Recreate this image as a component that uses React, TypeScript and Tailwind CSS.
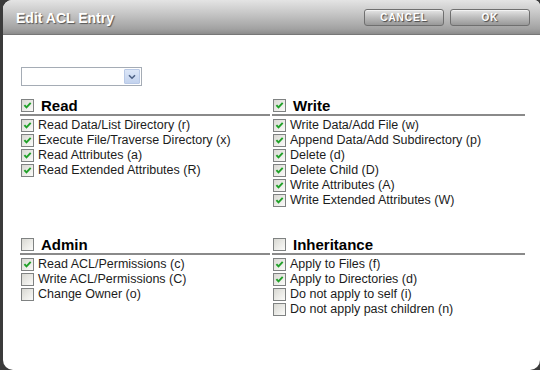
import React from "react";

function Check({ checked }: { checked: boolean }) {
  return (
    <span className="relative inline-block w-[13px] h-[13px] shrink-0 border border-[#7f8282] bg-[linear-gradient(135deg,#d8d8d2,#fbfbf9)]">
      {checked && (
        <svg viewBox="0 0 11 11" className="absolute left-0 top-0 w-[11px] h-[11px]">
          <path d="M2.4 5.1 L4.5 7.4 L8.7 2.8" fill="none" stroke="#21a129" strokeWidth="1.9" />
        </svg>
      )}
    </span>
  );
}

type Item = [string, boolean];

function Section({ title, checked, items }: { title: string; checked: boolean; items: Item[] }) {
  return (
    <div className="flex flex-col">
      <div className="h-[20px] flex items-center pl-[1px] gap-[7px] border-b-2 border-[#8a8a8a]">
        <Check checked={checked} />
        <span className="text-[15px] leading-[17px] font-bold text-black">{title}</span>
      </div>
      <div className="mt-[2px] flex flex-col">
        {items.map(([label, c]) => (
          <div key={label} className="h-[15px] flex items-center pl-[1px] gap-[4px]">
            <Check checked={c} />
            <span className="text-[12.5px] leading-[15px] text-[#1c1c1c] whitespace-nowrap">{label}</span>
          </div>
        ))}
      </div>
    </div>
  );
}

function Btn({ label }: { label: string }) {
  return (
    <div className="w-[80px] h-[17px] rounded-[3px] border border-[#6f6f6f] bg-[linear-gradient(to_bottom,#e6e6e6,#c0c0c0_45%,#989898)] flex items-center justify-center shadow-[inset_0_1px_0_#f2f2f2]">
      <span className="text-[10px] leading-[12px] font-bold tracking-[1px] text-white [text-shadow:1px_1px_1px_#444]">
        {label}
      </span>
    </div>
  );
}

export default function App() {
  return (
    <div
      className="w-[540px] h-[370px] bg-[#3b3b3b] overflow-hidden"
      style={{ fontFamily: '"Liberation Sans", Arial, sans-serif' }}
    >
      <div className="ml-[3px] w-[537px] h-[370px] bg-white rounded-tl-[9px] rounded-tr-[6px] rounded-b-[10px] overflow-hidden flex flex-col">
        <div className="h-[35px] shrink-0 flex items-center justify-between pl-[13px] pr-[10px] bg-[linear-gradient(to_bottom,#e4e4e4,#c6c6c6_40%,#a2a2a2_85%,#8c8c8c)] border-b border-[#777]">
          <span className="text-[14px] leading-[16px] font-bold text-white [text-shadow:1px_1px_1px_#555] pt-[1px]">
            Edit ACL Entry
          </span>
          <div className="flex gap-[6px] pt-[1px]">
            <Btn label="CANCEL" />
            <Btn label="OK" />
          </div>
        </div>

        <div className="pl-[17px] pt-[32px] flex flex-col">
          <div className="ml-[1px] w-[121px] h-[19px] border border-[#a5acb5] bg-white flex justify-end items-stretch p-[1px]">
            <div className="w-[16px] bg-[linear-gradient(to_bottom,#dce6f7,#c3d3ee)] border border-[#b9c9e6] rounded-[1px] flex items-center justify-center">
              <svg viewBox="0 0 8 6" className="w-[8px] h-[6px]">
                <path d="M1 1.2 L4 4.2 L7 1.2" fill="none" stroke="#4d6185" strokeWidth="1.6" />
              </svg>
            </div>
          </div>

          <div className="mt-[10px] grid grid-cols-[250px_253px] gap-x-[2px] gap-y-[27px]">
            <Section
              title="Read"
              checked
              items={[
                ["Read Data/List Directory (r)", true],
                ["Execute File/Traverse Directory (x)", true],
                ["Read Attributes (a)", true],
                ["Read Extended Attributes (R)", true],
              ]}
            />
            <Section
              title="Write"
              checked
              items={[
                ["Write Data/Add File (w)", true],
                ["Append Data/Add Subdirectory (p)", true],
                ["Delete (d)", true],
                ["Delete Child (D)", true],
                ["Write Attributes (A)", true],
                ["Write Extended Attributes (W)", true],
              ]}
            />
            <Section
              title="Admin"
              checked={false}
              items={[
                ["Read ACL/Permissions (c)", true],
                ["Write ACL/Permissions (C)", false],
                ["Change Owner (o)", false],
              ]}
            />
            <Section
              title="Inheritance"
              checked={false}
              items={[
                ["Apply to Files (f)", true],
                ["Apply to Directories (d)", true],
                ["Do not apply to self (i)", false],
                ["Do not apply past children (n)", false],
              ]}
            />
          </div>
        </div>
      </div>
    </div>
  );
}
